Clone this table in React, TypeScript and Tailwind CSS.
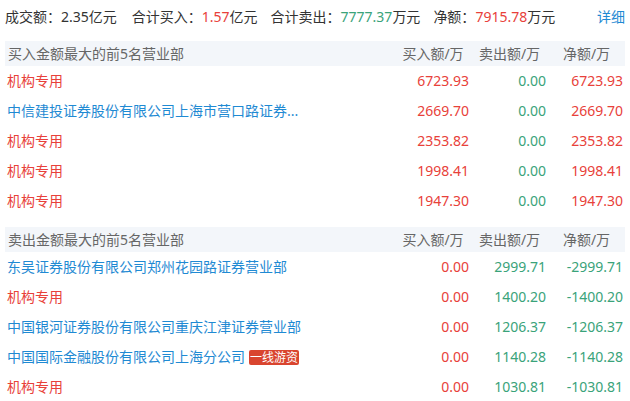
import React from 'react';

type Row = { name: string; buy: string; sell: string; net: string; link?: boolean; tag?: string };

const buyRows: Row[] = [
  { name: '机构专用', buy: '6723.93', sell: '0.00', net: '6723.93' },
  { name: '中信建投证券股份有限公司上海市营口路证券...', buy: '2669.70', sell: '0.00', net: '2669.70', link: true },
  { name: '机构专用', buy: '2353.82', sell: '0.00', net: '2353.82' },
  { name: '机构专用', buy: '1998.41', sell: '0.00', net: '1998.41' },
  { name: '机构专用', buy: '1947.30', sell: '0.00', net: '1947.30' },
];

const sellRows: Row[] = [
  { name: '东吴证券股份有限公司郑州花园路证券营业部', buy: '0.00', sell: '2999.71', net: '-2999.71', link: true },
  { name: '机构专用', buy: '0.00', sell: '1400.20', net: '-1400.20' },
  { name: '中国银河证券股份有限公司重庆江津证券营业部', buy: '0.00', sell: '1206.37', net: '-1206.37', link: true },
  { name: '中国国际金融股份有限公司上海分公司', buy: '0.00', sell: '1140.28', net: '-1140.28', link: true, tag: '一线游资' },
  { name: '机构专用', buy: '0.00', sell: '1030.81', net: '-1030.81' },
];

const RED = 'text-[#e8413a]';
const GREEN = 'text-[#3aa37a]';

const Section: React.FC<{ title: string; rows: Row[]; sellSide?: boolean }> = ({ title, rows, sellSide }) => (
  <div>
    <div className="flex h-[25px] items-center bg-[#f3f6fa] text-[14px] text-[#666]">
      <div className="flex-1 pl-[3px]">{title}</div>
      <div className="w-[76px] text-center">买入额/万</div>
      <div className="w-[77px] text-center">卖出额/万</div>
      <div className="w-[77px] text-center">净额/万</div>
    </div>
    {rows.map((r, i) => (
      <div key={i} className="flex h-[30px] items-center text-[14px]">
        <div className="flex flex-1 items-center pl-[2px]">
          <span className={r.link ? 'text-[#1f8ad3]' : RED}>{r.name}</span>
          {r.tag && (
            <span className="ml-[4px] rounded-[2px] bg-[#d9452f] px-[1px] text-[12px] leading-[15px] text-white">{r.tag}</span>
          )}
        </div>
        <div className={`w-[76px] pr-[2px] text-right ${RED}`}>{r.buy}</div>
        <div className={`w-[77px] pr-[2px] text-right ${GREEN}`}>{r.sell}</div>
        <div className={`w-[77px] pr-[2px] text-right ${sellSide ? GREEN : RED}`}>{r.net}</div>
      </div>
    ))}
  </div>
);

const App: React.FC = () => {
  return (
    <div className="w-[630px] h-[401px] overflow-hidden bg-white px-[5px] font-['Noto_Sans','Noto_Sans_CJK_SC',sans-serif] leading-[20px]">
      <div className="flex h-[33px] items-center text-[14px] text-[#333]">
        <span className="mr-[15px]">成交额：2.35亿元</span>
        <span className="mr-[13px]">合计买入：<span className={RED}>1.57</span>亿元</span>
        <span className="mr-[13px]">合计卖出：<span className={GREEN}>7777.37</span>万元</span>
        <span>净额：<span className={RED}>7915.78</span>万元</span>
        <span className="ml-auto text-[#1f8ad3]">详细</span>
      </div>
      <div className="mt-[8px]">
        <Section title="买入金额最大的前5名营业部" rows={buyRows} />
      </div>
      <div className="mt-[11px]">
        <Section title="卖出金额最大的前5名营业部" rows={sellRows} sellSide />
      </div>
    </div>
  );
};

export default App;
